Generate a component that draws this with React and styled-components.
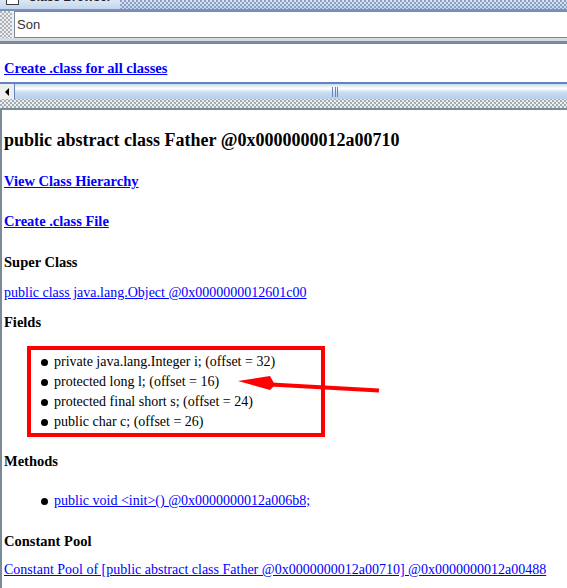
import React from "react";
import styled, { createGlobalStyle } from "styled-components";

const GlobalStyle = createGlobalStyle`
  html, body {
    margin: 0;
    padding: 0;
    background: #ffffff;
  }
  body {
    width: 567px;
    height: 588px;
    overflow: hidden;
  }
`;

// Metal look-and-feel "bumps" texture
const bumps = (color) => `
  background-image:
    radial-gradient(circle at 1px 1px, ${color} 0.7px, transparent 0.9px),
    radial-gradient(circle at 3px 3px, ${color} 0.7px, transparent 0.9px);
  background-size: 4px 4px;
`;

const Window = styled.div`
  position: relative;
  width: 567px;
  height: 588px;
  display: flex;
  flex-direction: column;
  overflow: hidden;
  font-family: "Liberation Serif", "Times New Roman", serif;
`;

const TitleBar = styled.div`
  height: 9px;
  display: flex;
  align-items: flex-start;
  overflow: hidden;
  background: linear-gradient(#dbe7f5, #c3d6ee);
  border-bottom: 2px solid #7d90b8;
`;

const FrameIcon = styled.div`
  flex-shrink: 0;
  width: 11px;
  height: 11px;
  margin: -8px 0 0 6px;
  border: 1px solid #3c3c3c;
  background: #ffffff;
`;

const TitleText = styled.div`
  margin: -9px 0 0 9px;
  font-family: "Liberation Sans", Arial, sans-serif;
  font-weight: bold;
  font-size: 12px;
  line-height: 12px;
  color: #222;
  white-space: nowrap;
`;

const TitleBumps = styled.div`
  flex: 1;
  height: 9px;
  margin-left: 9px;
  ${bumps("#8a9cc0")}
`;

const ToolRow = styled.div`
  height: 27px;
  display: flex;
  background: #eeeeee;
`;

const Grip = styled.div`
  width: 12px;
  flex-shrink: 0;
  ${bumps("#a8b0b8")}
`;

const TextField = styled.div`
  flex: 1;
  margin-left: 2px;
  display: flex;
  align-items: center;
  padding-left: 2px;
  background: #ffffff;
  border: 1px solid #7a8a99;
  border-right: none;
  font-family: "Liberation Sans", Arial, sans-serif;
  font-size: 13px;
  color: #333333;
`;

const Ridge = styled.div`
  height: 3px;
  background: #d6dbe0;
  border-bottom: 3px solid #7a8a99;
`;

const TopPane = styled.div`
  height: 38px;
  box-sizing: border-box;
  padding: 14px 0 0 4px;
  background: #ffffff;
`;

const Link = styled.a`
  display: block;
  color: #0000ff;
  text-decoration: underline;
  white-space: nowrap;
  font-size: ${(p) => (p.$bold ? "14.5px" : "14px")};
  font-weight: ${(p) => (p.$bold ? "bold" : "normal")};
  line-height: 20px;
  margin-top: ${(p) => p.$top || 0}px;
`;

const ScrollBar = styled.div`
  height: 15px;
  display: flex;
  overflow: hidden;
  border-top: 2px solid #6382bf;
`;

const ArrowButton = styled.div`
  width: 15px;
  flex-shrink: 0;
  display: flex;
  align-items: center;
  padding-left: 5px;
  box-sizing: border-box;
  background: #eeeeee;
  border-right: 1px solid #6382bf;
  &::before {
    content: "";
    width: 0;
    height: 0;
    border-top: 4px solid transparent;
    border-bottom: 4px solid transparent;
    border-right: 4px solid #000;
  }
`;

const Thumb = styled.div`
  flex-shrink: 0;
  width: 640px;
  display: flex;
  align-items: center;
  justify-content: center;
  background: linear-gradient(#c8ddf2 0%, #ffffff 30%, #c8ddf2 55%, #b8cfe5 100%);
`;

const ThumbGrip = styled.div`
  width: 6px;
  height: 10px;
  background: repeating-linear-gradient(90deg, #6382bf 0 1px, transparent 1px 2.5px);
`;

const Divider = styled.div`
  height: 9px;
  background-color: #eeeeee;
  ${bumps("#a0a8b0")}
  background-position: 0 1px;
  border-bottom: 2px solid #7a8a99;
`;

const Content = styled.div`
  flex: 1;
  padding-left: 2px;
  border-left: 2px solid #7a8a99;
  background: #ffffff;
  color: #000000;
`;

const ClassTitle = styled.div`
  margin-top: 18px;
  font-size: 18px;
  font-weight: bold;
  line-height: 24px;
  white-space: nowrap;
`;

const Section = styled.div`
  margin-top: ${(p) => p.$top}px;
  font-size: 14.5px;
  font-weight: bold;
  line-height: 20px;
`;

const FieldBox = styled.ul`
  list-style: none;
  margin: 14px 0 0 23px;
  padding: 2px 0 1px 10px;
  width: 298px;
  box-sizing: border-box;
  border: 4px solid #ff0000;
`;

const MethodList = styled.ul`
  list-style: none;
  margin: 20px 0 0 37px;
  padding: 0;
`;

const Item = styled.li`
  display: flex;
  align-items: center;
  gap: 6px;
  height: 20px;
  font-size: 14px;
  white-space: nowrap;
  &::before {
    content: "";
    flex-shrink: 0;
    width: 7px;
    height: 7px;
    border-radius: 50%;
    background: #000000;
  }
`;

const Arrow = styled.svg`
  position: absolute;
  left: 230px;
  top: 368px;
  width: 160px;
  height: 30px;
  pointer-events: none;
`;

const fields = [
  "private java.lang.Integer i; (offset = 32)",
  "protected long l; (offset = 16)",
  "protected final short s; (offset = 24)",
  "public char c; (offset = 26)",
];

export default function App() {
  return (
    <>
      <GlobalStyle />
      <Window>
        <TitleBar>
          <FrameIcon />
          <TitleText>Class Browser</TitleText>
          <TitleBumps />
        </TitleBar>
        <ToolRow>
          <Grip />
          <TextField>Son</TextField>
        </ToolRow>
        <Ridge />
        <TopPane>
          <Link $bold>Create .class for all classes</Link>
        </TopPane>
        <ScrollBar>
          <ArrowButton />
          <Thumb>
            <ThumbGrip />
          </Thumb>
        </ScrollBar>
        <Divider />
        <Content>
          <ClassTitle>public abstract class Father @0x0000000012a00710</ClassTitle>
          <Link $bold $top={19}>View Class Hierarchy</Link>
          <Link $bold $top={20}>Create .class File</Link>
          <Section $top={21}>Super Class</Section>
          <Link $top={11}>public class java.lang.Object @0x0000000012601c00</Link>
          <Section $top={9}>Fields</Section>
          <FieldBox>
            {fields.map((f) => (
              <Item key={f}>{f}</Item>
            ))}
          </FieldBox>
          <Section $top={14}>Methods</Section>
          <MethodList>
            <Item>
              <Link as="span">public void &lt;init&gt;() @0x0000000012a006b8;</Link>
            </Item>
          </MethodList>
          <Section $top={20}>Constant Pool</Section>
          <Link $top={9}>
            Constant Pool of [public abstract class Father @0x0000000012a00710] @0x0000000012a00488
          </Link>
        </Content>
        <Arrow viewBox="230 368 160 30">
          <line x1="271" y1="384.5" x2="379" y2="390.5" stroke="#ff0000" strokeWidth="4" />
          <polygon points="238,381 270,376 275,385 270,390" fill="#ff0000" />
        </Arrow>
      </Window>
    </>
  );
}
